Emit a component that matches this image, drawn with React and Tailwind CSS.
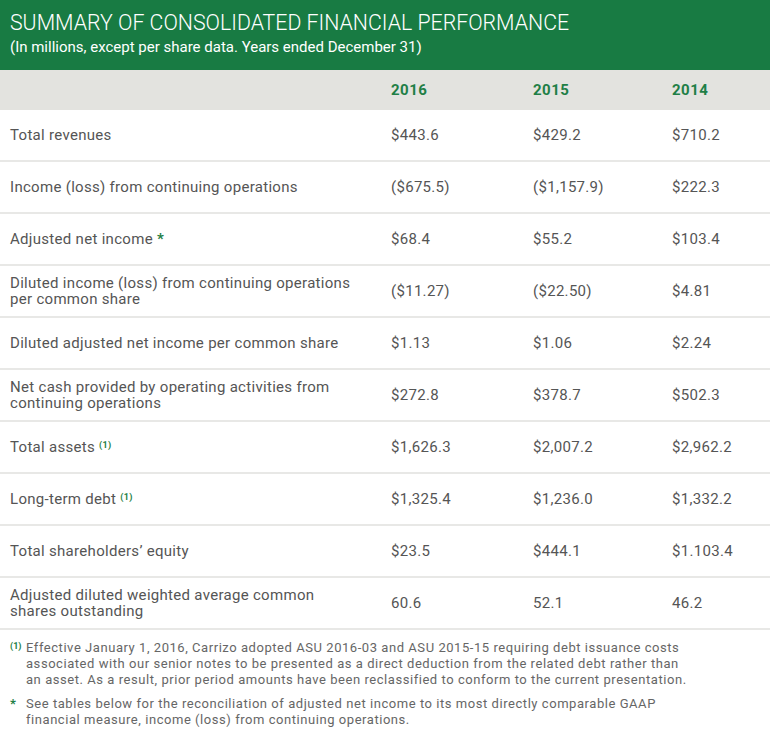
import React from 'react';

const rows = [
  { label: 'Total revenues', v: ['$443.6', '$429.2', '$710.2'] },
  { label: 'Income (loss) from continuing operations', v: ['($675.5)', '($1,157.9)', '$222.3'] },
  { label: 'Adjusted net income', mark: 'star', v: ['$68.4', '$55.2', '$103.4'] },
  { label: 'Diluted income (loss) from continuing operations per common share', v: ['($11.27)', '($22.50)', '$4.81'] },
  { label: 'Diluted adjusted net income per common share', v: ['$1.13', '$1.06', '$2.24'] },
  { label: 'Net cash provided by operating activities from continuing operations', v: ['$272.8', '$378.7', '$502.3'] },
  { label: 'Total assets', mark: 'note', v: ['$1,626.3', '$2,007.2', '$2,962.2'] },
  { label: 'Long-term debt', mark: 'note', v: ['$1,325.4', '$1,236.0', '$1,332.2'] },
  { label: 'Total shareholders’ equity', v: ['$23.5', '$444.1', '$1.103.4'] },
  { label: 'Adjusted diluted weighted average common shares outstanding', v: ['60.6', '52.1', '46.2'] },
];

const App = () => {
  return (
    <div className="w-[770px] h-[743px] bg-white text-[#555] font-['Roboto',sans-serif]">
      {/* header */}
      <div className="h-[70px] bg-[#187b43] px-[10px] pt-[10px] text-white">
        <h1 className="text-[21.3px] font-light leading-[26px]">SUMMARY OF CONSOLIDATED FINANCIAL PERFORMANCE</h1>
        <p className="text-[15px] leading-[20px] mt-[1px]">(In millions, except per share data. Years ended December 31)</p>
      </div>
      <div className="grid grid-cols-[381px_142px_139px_1fr] h-[40px] items-center bg-[#e3e3df] text-[#1f7f46] font-bold text-[15px] tracking-[0.5px]">
        <div />
        <div className="pl-[10px]">2016</div>
        <div className="pl-[10px]">2015</div>
        <div className="pl-[10px]">2014</div>
      </div>
      {rows.map((r, i) => (
        <div
          key={i}
          className="grid grid-cols-[381px_142px_139px_1fr] h-[52px] items-center border-b-2 border-[#e8e8e6] text-[15px] leading-[16px] tracking-[0.3px]"
        >
          <div className="pl-[10px] pr-[20px]">
            {r.label}
            {r.mark === 'star' && <span className="text-[#1f7f46] font-bold"> *</span>}
            {r.mark === 'note' && <sup className="text-[#1f7f46] text-[9px] font-bold ml-[4px]">(1)</sup>}
          </div>
          {r.v.map((v, j) => (
            <div key={j} className="pl-[10px]">{v}</div>
          ))}
        </div>
      ))}
      {/* footnotes */}
      <div className="px-[10px] pt-[10px] text-[13px] leading-[16px] text-[#666] tracking-[0.55px] whitespace-nowrap">
        <div className="flex">
          <span className="w-[16px] shrink-0 text-[9px] font-bold text-[#1f7f46] leading-[12px] tracking-normal">(1)</span>
          <p>
            Effective January 1, 2016, Carrizo adopted ASU 2016-03 and ASU 2015-15 requiring debt issuance costs<br />
            associated with our senior notes to be presented as a direct deduction from the related debt rather than<br />
            an asset. As a result, prior period amounts have been reclassified to conform to the current presentation.
          </p>
        </div>
        <div className="flex mt-[8px]">
          <span className="w-[16px] shrink-0 font-bold text-[#1f7f46]">*</span>
          <p>
            See tables below for the reconciliation of adjusted net income to its most directly comparable GAAP<br />
            financial measure, income (loss) from continuing operations.
          </p>
        </div>
      </div>
    </div>
  );
};

export default App;
